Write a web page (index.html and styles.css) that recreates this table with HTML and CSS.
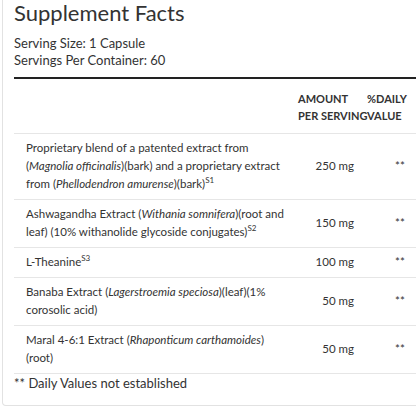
FILE: index.html
```html
<!doctype html>
<html lang="en">
<head>
    <meta charset="UTF-8">
    <meta name="viewport" content="width=device-width, initial-scale=1.0">
    <title>Supplement Facts</title>
    <link rel="stylesheet" href="styles.css">
</head>
<body>
    <div class="facts">
        <h2 class="facts-title">Supplement Facts</h2>
        <div class="serving">
            <p>Serving Size: 1 Capsule</p>
            <p>Servings Per Container: 60</p>
        </div>
        <table class="facts-table">
            <thead>
                <tr>
                    <th class="col-name"></th>
                    <th class="col-amount">Amount<br>per serving</th>
                    <th class="col-daily">%Daily<br>Value</th>
                </tr>
            </thead>
            <tbody>
                <tr>
                    <td class="col-name">Proprietary blend of a patented extract from (<em>Magnolia officinalis</em>)(bark) and a proprietary extract from (<em>Phellodendron amurense</em>)(bark)<sup>S1</sup></td>
                    <td class="col-amount">250 mg</td>
                    <td class="col-daily">**</td>
                </tr>
                <tr>
                    <td class="col-name">Ashwagandha Extract (<em>Withania somnifera</em>)(root and leaf) (10% withanolide glycoside conjugates)<sup>S2</sup></td>
                    <td class="col-amount">150 mg</td>
                    <td class="col-daily">**</td>
                </tr>
                <tr>
                    <td class="col-name">L-Theanine<sup>S3</sup></td>
                    <td class="col-amount">100 mg</td>
                    <td class="col-daily">**</td>
                </tr>
                <tr>
                    <td class="col-name">Banaba Extract (<em>Lagerstroemia speciosa</em>)(leaf)(1% corosolic acid)</td>
                    <td class="col-amount">50 mg</td>
                    <td class="col-daily">**</td>
                </tr>
                <tr>
                    <td class="col-name">Maral 4-6:1 Extract (<em>Rhaponticum carthamoides</em>) (root)</td>
                    <td class="col-amount">50 mg</td>
                    <td class="col-daily">**</td>
                </tr>
            </tbody>
        </table>
        <p class="footnote">** Daily Values not established</p>
    </div>
</body>
</html>
```

FILE: styles.css
```css
* {
    margin: 0;
    padding: 0;
    box-sizing: border-box;
    font-family: Lato, "Open Sans", Arial, sans-serif;
}

body {
    background-color: #fff;
    color: #333;
    overflow: hidden;
}

.facts {
    margin-left: 2px;
    width: 440px;
    padding: 0 0 13px 11px;
    border: 1px solid #e2e2e2;
    border-top: none;
    border-radius: 0 0 4px 4px;
}

.facts-title {
    font-size: 22px;
    font-weight: 400;
    line-height: 26px;
    color: #333;
}

.serving {
    padding: 9px 0 8px;
    font-size: 13px;
    line-height: 17px;
}

.facts-table {
    width: 100%;
    border-collapse: collapse;
    border-top: 2px solid #222;
    table-layout: fixed;
}

.facts-table th {
    font-size: 11px;
    font-weight: 700;
    text-transform: uppercase;
    text-align: left;
    white-space: nowrap;
    line-height: 17px;
    padding: 11px 0 9px;
    vertical-align: top;
    border-bottom: 1px solid #e6e6e6;
}

.facts-table td {
    font-size: 11.5px;
    line-height: 18px;
    padding: 5px 0 6px;
    border-bottom: 1px solid #e6e6e6;
    vertical-align: middle;
}

.col-name {
    width: 284px;
}

.facts-table td.col-name {
    padding: 5px 8px 6px 12px;
}

.col-amount {
    width: 69px;
}

.facts-table td.col-amount {
    text-align: right;
    padding-right: 13px;
}

.facts-table td.col-daily {
    padding-left: 28px;
}

sup {
    font-size: 8px;
    line-height: 0;
}

.footnote {
    font-size: 13px;
    line-height: 18px;
}
```
